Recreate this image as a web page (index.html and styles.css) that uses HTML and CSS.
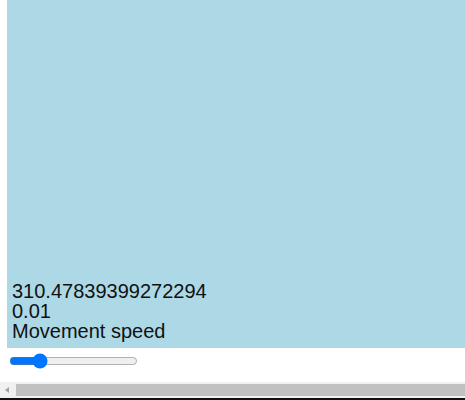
FILE: index.html
```html
<!DOCTYPE html>
<html>
<head>
<meta charset="utf-8">
<link rel="stylesheet" href="styles.css">
</head>
<body>
<div class="stage">
  <div class="readout">310.47839399272294</div>
  <div class="readout">0.01</div>
  <div class="readout">Movement speed</div>
</div>
<input class="speed" type="range" min="0" max="0.05" step="0.01" value="0.01">
<div class="hscroll">
  <div class="hscroll-arrow"></div>
  <div class="hscroll-thumb"></div>
</div>
</body>
</html>
```
FILE: styles.css
```css
html, body {
  margin: 0;
  padding: 0;
}
body {
  margin-left: 7px;
  font-family: "Liberation Sans", Arial, sans-serif;
  font-size: 20px;
  color: #111;
}
.stage {
  width: 480px;
  height: 348px;
  background: #add8e6;
  display: flex;
  flex-direction: column;
  justify-content: flex-end;
  padding: 0 0 7px 5px;
  box-sizing: border-box;
}
.readout {
  line-height: 20px;
}
.speed {
  display: block;
  margin: 5px 2px 2px;
  width: 129px;
}
.hscroll {
  position: fixed;
  left: 0;
  right: 0;
  bottom: 0;
  height: 16px;
  background: #f1f1f1;
  border-bottom: 2px solid #111;
  display: flex;
  align-items: center;
}
.hscroll-arrow {
  width: 0;
  height: 0;
  margin: 0 5px 0 5px;
  border-top: 3.5px solid transparent;
  border-bottom: 3.5px solid transparent;
  border-right: 4px solid #a3a3a3;
}
.hscroll-thumb {
  flex: 1;
  height: 12px;
  margin-left: 2px;
  background: #c1c1c1;
}
```
